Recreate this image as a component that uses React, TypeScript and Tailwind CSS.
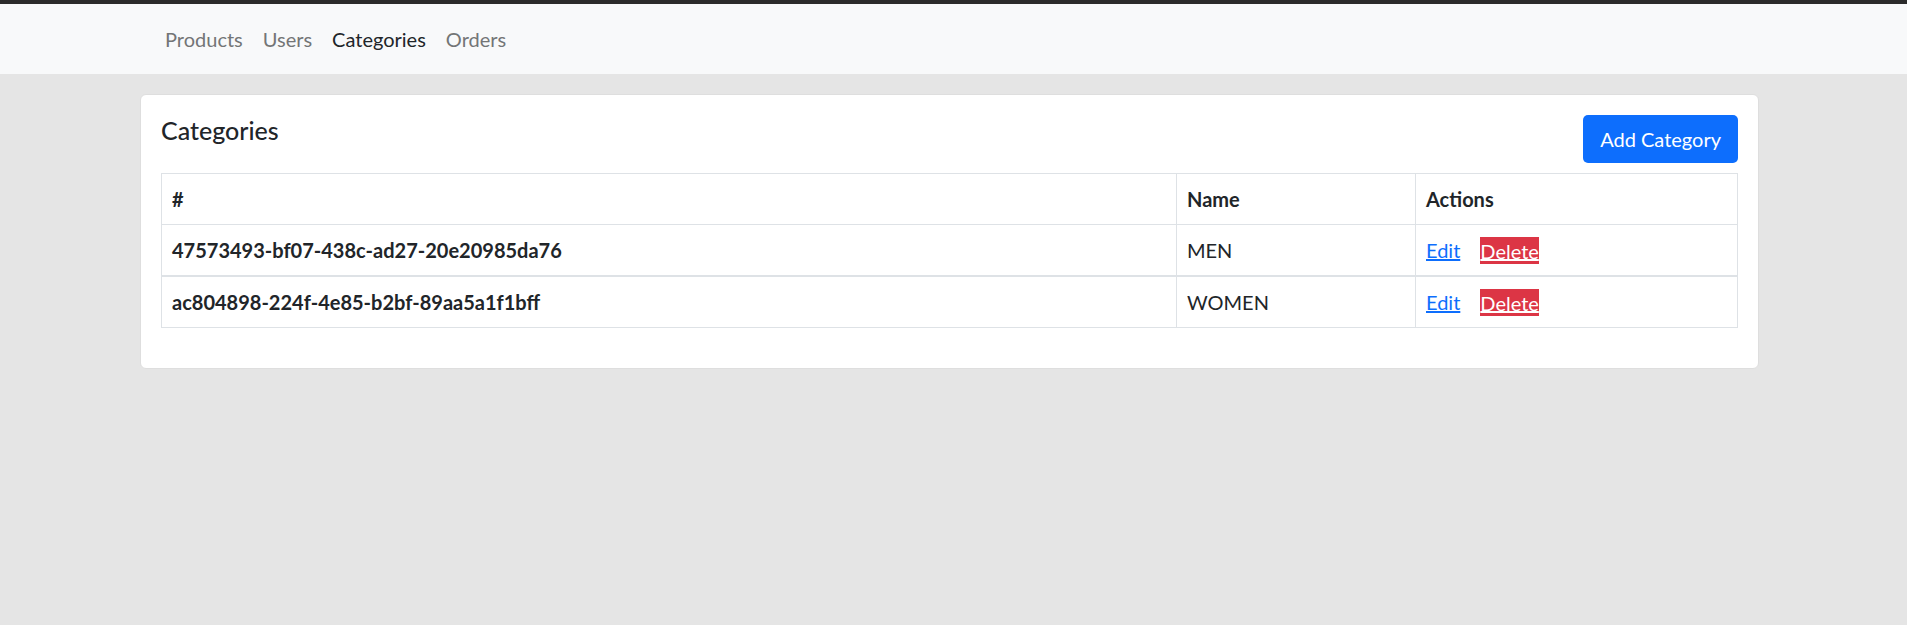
const navLinks = [
  { label: 'Products', active: false },
  { label: 'Users', active: false },
  { label: 'Categories', active: true },
  { label: 'Orders', active: false },
];

const categories = [
  { id: '47573493-bf07-438c-ad27-20e20985da76', name: 'MEN' },
  { id: 'ac804898-224f-4e85-b2bf-89aa5a1f1bff', name: 'WOMEN' },
];

export default function App() {
  return (
    <div className="min-h-screen bg-[#e5e5e5] border-t-4 border-[#2b2b2b] font-['Lato','Liberation_Sans',sans-serif] text-[20px] text-[#212529]">
      <nav className="bg-[#f8f9fa] py-[10px]">
        <ul className="flex pl-[155px]">
          {navLinks.map(link => (
            <li key={link.label}>
              <a
                href="#"
                className={`block px-[10px] py-[10px] leading-[30px] ${link.active ? 'text-[#212529]' : 'text-[#737576]'}`}
              >
                {link.label}
              </a>
            </li>
          ))}
        </ul>
      </nav>

      <main className="pt-[20px] pl-[140px]">
        <div className="w-[1619px] rounded-[6px] border border-[#dedede] bg-white p-[20px]">
          <div className="flex items-start justify-between">
            <h5 className="text-[25px] leading-[30px] font-medium">Categories</h5>
            <button className="h-[48px] rounded-[5px] bg-[#0d6efd] px-[17px] text-white leading-[30px]">
              Add Category
            </button>
          </div>

          <table className="mt-[10px] mb-[20px] w-full table-fixed border-collapse text-left">
            <colgroup>
              <col className="w-[1015px]" />
              <col className="w-[239px]" />
              <col />
            </colgroup>
            <thead>
              <tr>
                <th className="border border-[#dee2e6] px-[10px] py-[10px] leading-[30px] font-bold">#</th>
                <th className="border border-[#dee2e6] px-[10px] py-[10px] leading-[30px] font-bold">Name</th>
                <th className="border border-[#dee2e6] px-[10px] py-[10px] leading-[30px] font-bold">Actions</th>
              </tr>
            </thead>
            <tbody>
              {categories.map((cat, i) => (
                <tr key={cat.id} className={i === 0 ? 'border-b-2 border-[#dee2e6]' : ''}>
                  <th className="border border-[#dee2e6] px-[10px] py-[10px] leading-[30px] font-bold">{cat.id}</th>
                  <td className="border border-[#dee2e6] px-[10px] py-[10px] leading-[30px]">{cat.name}</td>
                  <td className="border border-[#dee2e6] px-[10px] py-[10px] leading-[30px]">
                    <a href="#" className="mr-[20px] text-[#0d6efd] underline">Edit</a>
                    <a href="#" className="bg-[#dc3545] py-[1.5px] text-white underline">Delete</a>
                  </td>
                </tr>
              ))}
            </tbody>
          </table>
        </div>
      </main>
    </div>
  );
}
